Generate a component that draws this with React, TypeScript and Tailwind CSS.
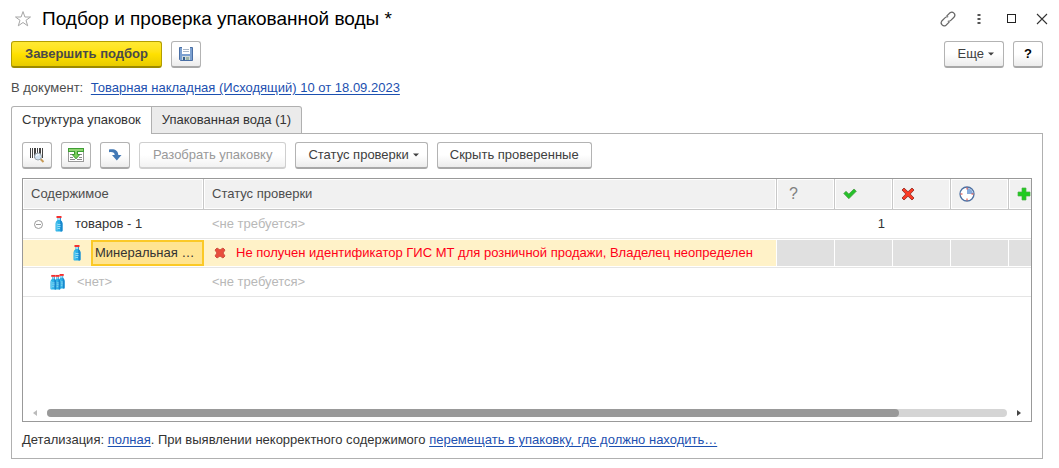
import type { ReactNode } from "react";
import { clsx } from "clsx";

const base =
  "flex h-[27px] shrink-0 items-center justify-center rounded-[3px] border border-b-2 text-[13px] leading-4 whitespace-nowrap";
const plain =
  "border-[#b3b3b3] border-b-[#a8a8a8] bg-linear-to-b from-white from-50% to-[#ececec] text-[#404040]";

function Button({
  children,
  label,
  icon,
  wide,
  disabled,
}: {
  children: ReactNode;
  label?: string;
  icon?: boolean;
  wide?: boolean;
  disabled?: boolean;
}) {
  return (
    <button
      type="button"
      aria-label={label}
      disabled={disabled}
      className={clsx(
        base,
        icon ? "w-[30px]" : wide ? "px-[13px]" : "px-3",
        disabled
          ? "border-[#cfcfcf] bg-linear-to-b from-white from-50% to-[#f2f2f2] text-[#999999]"
          : plain
      )}
    >
      {children}
    </button>
  );
}

function Caret() {
  return (
    <svg width="6" height="4" viewBox="0 0 6 4" className="ml-1 -mr-1" aria-hidden="true">
      <path d="M0 0.5h6L3 3.5z" fill="#404040" />
    </svg>
  );
}

function StarIcon() {
  return (
    <svg width="18" height="18" viewBox="0 0 18 18" fill="none" stroke="#a6a6a6" aria-hidden="true">
      <path d="M9 1.6l1.9 5.4h5.6l-4.5 3.3 1.7 5.500L9 12.500l-4.700 3.300L6 10.300 1.500 7h5.600z" />
    </svg>
  );
}

function LinkIcon() {
  return (
    <svg width="18" height="18" viewBox="0 0 18 18" fill="none" stroke="#666" strokeWidth="1.2" aria-hidden="true">
      <path d="M7.600 6.200l3.400-3.400a3 3 0 0 1 4.200 4.200l-3.400 3.400a3 3 0 0 1-3 .7" />
      <path d="M10.400 11.800l-3.400 3.400a3 3 0 0 1-4.200-4.200l3.400-3.400a3 3 0 0 1 3-.7" />
    </svg>
  );
}

function SaveIcon() {
  return (
    <svg width="14" height="14" viewBox="0 0 14 14" aria-hidden="true">
      <path d="M.5.5h13v13h-12l-1-1z" fill="#7ba0d0" stroke="#4a6fa5" />
      <path d="M3 0h8v7H3z" fill="#fff" />
      <path d="M4 2.5h6M4 4.5h6" stroke="#a9b7c8" />
      <path d="M3 9h8v4H3z" fill="#cfdadc" />
      <path d="M4 10h2v3H4z" fill="#355f8c" />
      <path d="M7 10h3v3H7z" fill="#9db5a6" />
    </svg>
  );
}

function BarcodeIcon() {
  return (
    <svg width="16" height="16" viewBox="0 0 16 16" aria-hidden="true">
      <path
        d="M1 1h1v10H1zM3 1h1v10H3zM5 1h2v10H5zM8 1h1v10H8zM10 1h2v10h-2zM13 1h1v10h-1z"
        fill="#444"
      />
      <path d="M11.500 12l3 3" stroke="#c79a55" strokeWidth="2" />
      <circle cx="9" cy="9.500" r="3.500" fill="#d3e4f2" stroke="#9aa3aa" />
      <path d="M7 9q1-1.500 3-1.300" stroke="#fff" fill="none" />
    </svg>
  );
}

function InsertIcon() {
  return (
    <svg width="16" height="14" viewBox="0 0 16 14" aria-hidden="true">
      <rect x=".5" y=".5" width="15" height="13" fill="#fff" stroke="#999" />
      <path d="M2 6.500h3M11 6.500h3M2 9.500h3M11 9.500h3M2 11.500h5M9 11.500h5" stroke="#888" />
      <path d="M0 0h16v4H0z" fill="#3f9e35" />
      <path d="M1 1h14v2H1z" fill="#8fd572" />
      <path d="M6.500 3.500h3v3h2.300L8 10.800 4.200 6.500h2.300z" fill="#7cce5c" stroke="#36952d" />
      <path d="M7 2h2v2H7z" fill="#8fd572" />
    </svg>
  );
}

function TurnIcon() {
  return (
    <svg width="14" height="14" viewBox="0 0 14 14" aria-hidden="true">
      <path d="M1 1.500C6 .3 10.300 2.200 10.300 7H13.500l-4.700 5.500L4 7h2.700C6.700 4.700 4.600 3.600 1 4.200z" fill="#4379b5" />
    </svg>
  );
}

function Bottle({ x = 0, y = 0 }: { x?: number; y?: number }) {
  return (
    <g transform={`translate(${x} ${y})`}>
      <path d="M2.500 2h3v2q2 1.500 2 3.500v7q0 1-1 1h-5q-1 0-1-1v-7q0-2 2-3.500z" fill="#2cb1e6" />
      <path d="M5 2h.8v2.200Q7.500 5.500 7.500 7.500v7q0 1-1 1H5.500z" fill="#1a86cc" />
      <path d="M2 6.500v8" stroke="#6fd3f5" />
      <path d="M2.500 8.500h3M2.500 10.500h3M2.500 12.500h2.500" stroke="#c4eefc" strokeWidth=".7" />
      <rect x="3" y="2" width="2" height="2" fill="#a8dbef" />
      <rect x="1.500" y="0" width="5" height="2" fill="#f32f2f" />
    </g>
  );
}

function BottleIcon() {
  return (
    <svg width="8" height="16" viewBox="0 0 8 16" className="shrink-0" aria-hidden="true">
      <Bottle />
    </svg>
  );
}

function BottlesIcon() {
  return (
    <svg width="15" height="16" viewBox="0 0 18 17" preserveAspectRatio="none" className="shrink-0" aria-hidden="true">
      <Bottle x={10} />
      <Bottle x={5} y={1} />
      <Bottle y={1} />
    </svg>
  );
}

function CheckIcon() {
  return (
    <svg width="14" height="12" viewBox="0 0 14 12" aria-hidden="true">
      <path d="M.8 5.500L3 3.300l2.800 2.800L11 1l2.300 2.200-7.500 7.500z" fill="#25c22a" stroke="#4c9d45" strokeWidth=".8" />
    </svg>
  );
}

function CrossIcon() {
  return (
    <svg width="14" height="14" viewBox="0 0 14 14" aria-hidden="true">
      <path
        d="M1 3l2-2 4 3.800L11 1l2 2-3.800 4L13 11l-2 2-4-3.800L3 13l-2-2 3.800-4z"
        fill="#fb3b25"
        stroke="#a33c33"
      />
    </svg>
  );
}

function ErrorIcon() {
  return (
    <svg width="12" height="12" viewBox="0 0 12 12" className="shrink-0" aria-hidden="true">
      <path d="M1 3l2-2 3 2 3-2 2 2-2 3 2 3-2 2-3-2-3 2-2-2 2-3z" fill="#e94e3d" stroke="#cf5142" />
    </svg>
  );
}

function ClockIcon() {
  return (
    <svg width="16" height="16" viewBox="0 0 16 16" aria-hidden="true">
      <circle cx="8" cy="8" r="7" fill="#fff" stroke="#4d71a3" strokeWidth="1.300" />
      <path d="M8 8V2a6 6 0 0 1 6 6z" fill="#86abdc" />
      <path d="M8 1.500v2M8 12.500v2M1.500 8h2M12.500 8h2" stroke="#e23c2e" />
    </svg>
  );
}

function PlusIcon() {
  return (
    <svg width="14" height="14" viewBox="0 0 14 14" aria-hidden="true">
      <path d="M5 1h4v4h4v4H9v4H5V9H1V5h4z" fill="#20cb20" stroke="#4caf45" strokeWidth=".7" />
    </svg>
  );
}

function HeadCell({ children, label }: { children: ReactNode; label?: string }) {
  return (
    <th
      scope="col"
      aria-label={label}
      className="h-[31px] border-r border-b border-[#c8c8c8] bg-[#f1f1f1] p-0 pl-2 text-left font-normal text-[#4d4d4d] shadow-[inset_0_0_0_1px_white]"
    >
      {children}
    </th>
  );
}

const link = "text-[#1c50b0] underline underline-offset-2";
const cell = "h-[29px] border-b border-[#e5e5e5] p-0";
const counters = ["unknown", "ok", "failed", "pending", "added"];

function ContentTable() {
  return (
    <table className="w-full min-w-[1044px] table-fixed border-separate border-spacing-0">
      <colgroup>
        <col className="w-[181px]" />
        <col />
        {counters.map((c) => (
          <col key={c} className="w-[58px]" />
        ))}
      </colgroup>
      <thead>
        <tr>
          <HeadCell>Содержимое</HeadCell>
          <HeadCell>Статус проверки</HeadCell>
          <HeadCell label="Не проверено">
            <span className="pl-1 text-base text-[#808080]">?</span>
          </HeadCell>
          <HeadCell label="В наличии">
            <CheckIcon />
          </HeadCell>
          <HeadCell label="Отсутствует">
            <CrossIcon />
          </HeadCell>
          <HeadCell label="Отложено">
            <ClockIcon />
          </HeadCell>
          <HeadCell label="Добавлено">
            <PlusIcon />
          </HeadCell>
        </tr>
      </thead>
      <tbody>
        <tr>
          <td className={cell}>
            <div className="flex items-center pl-[11px]">
              <button type="button" aria-label="Свернуть" className="mr-3">
                <svg width="9" height="9" viewBox="0 0 9 9" fill="none" stroke="#999" className="block">
                  <circle cx="4.500" cy="4.500" r="4" />
                  <path d="M2 4.500h5" />
                </svg>
              </button>
              <BottleIcon />
              <span className="pl-3">товаров - 1</span>
            </div>
          </td>
          <td className={clsx(cell, "pl-2 text-[#b8b8b8]")}>&lt;не требуется&gt;</td>
          {counters.map((c) => (
            <td key={c} className={clsx(cell, "pr-2 text-right")}>
              {c === "ok" && "1"}
            </td>
          ))}
        </tr>
        {/* Selected row */}
        <tr aria-selected="true">
          <td className={cell}>
            <div className="flex h-[26px] items-center bg-[#fff2c8] pl-[50px]">
              <BottleIcon />
              <span className="ml-2.5 flex h-full flex-1 items-center border-2 border-[#fbc926] bg-[#ffe491] px-0.5 whitespace-nowrap">
                Минеральная …
              </span>
            </div>
          </td>
          <td className={cell}>
            <div className="mr-px flex h-[26px] items-center gap-2.5 bg-[#fff2c8] pl-2.5 text-[#ff0018]">
              <ErrorIcon />
              <span className="truncate">
                Не получен идентификатор ГИС МТ для розничной продажи, Владелец неопределен
              </span>
            </div>
          </td>
          {counters.map((c) => (
            <td key={c} className={cell}>
              <div className="mr-px h-[26px] bg-[#e0e0e0]" />
            </td>
          ))}
        </tr>
        <tr>
          <td className={cell}>
            <div className="flex items-center gap-3 pl-[27px] text-[#b8b8b8]">
              <BottlesIcon />
              &lt;нет&gt;
            </div>
          </td>
          <td className={clsx(cell, "pl-2 text-[#b8b8b8]")}>&lt;не требуется&gt;</td>
          {counters.map((c) => (
            <td key={c} className={cell} />
          ))}
        </tr>
      </tbody>
    </table>
  );
}

function ScrollBar() {
  return (
    <div className="flex h-4 items-center gap-2.5 px-2.5">
      <button type="button" aria-label="Влево">
        <svg width="4" height="6" viewBox="0 0 4 6" className="block">
          <path d="M4 0v6L0 3z" fill="#bbb" />
        </svg>
      </button>
      <div className="h-2 flex-1 rounded-full bg-[#d5d5d5]">
        <div className="h-2 w-[88.7%] rounded-full bg-[#999999]" />
      </div>
      <button type="button" aria-label="Вправо">
        <svg width="4" height="6" viewBox="0 0 4 6" className="block">
          <path d="M0 0v6l4-3z" fill="#444" />
        </svg>
      </button>
    </div>
  );
}

export default function App() {
  return (
    <main className="bg-white pr-4 pb-2.5 pl-[11px] font-['Liberation_Sans',Arial,sans-serif] text-[13px] leading-4 text-[#333333]">
      {/* Window title */}
      <header className="flex h-[41px] items-center pb-1">
        <button type="button" aria-label="В избранное" className="mr-2.5 ml-[3px]">
          <StarIcon />
        </button>
        <h1 className="flex-1 text-[19px] leading-6 text-black">Подбор и проверка упакованной воды *</h1>
        <div className="-mr-[5px] flex items-center gap-[18px]">
          <button type="button" aria-label="Ссылка">
            <LinkIcon />
          </button>
          <button type="button" aria-label="Меню" className="pr-2 pl-0.5">
            <svg width="4" height="12" viewBox="0 0 4 12" fill="#555" className="block">
              <path d="M.5 1h3v2h-3zM.5 5h3v2h-3zM.5 9h3v2h-3z" />
            </svg>
          </button>
          <button type="button" aria-label="Развернуть" className="pr-0.5">
            <svg width="9" height="9" viewBox="0 0 9 9" fill="none" stroke="#222" className="block">
              <rect x=".5" y=".5" width="8" height="8" />
            </svg>
          </button>
          <button type="button" aria-label="Закрыть">
            <svg width="12" height="12" viewBox="0 0 12 12" fill="none" stroke="#333" strokeWidth="1.100" className="block">
              <path d="M1 1l10 10M11 1L1 11" />
            </svg>
          </button>
        </div>
      </header>

      {/* Form commands */}
      <div className="flex gap-[9px]">
        <button
          type="button"
          className={clsx(
            base,
            "border-[#b39e00] border-b-[#9c8a00] bg-linear-to-b from-[#ffe934] via-[#ffe100] to-[#e8cb00] px-[13px] font-bold text-[#4a4a4a]"
          )}
        >
          Завершить подбор
        </button>
        <Button icon label="Записать">
          <SaveIcon />
        </Button>
        <span className="flex-1" />
        <Button wide>
          Еще
          <Caret />
        </Button>
        <Button icon label="Справка">
          <b className="text-black">?</b>
        </Button>
      </div>

      <p className="pt-3 pb-2.5 text-[#4d4d4d]">
        В документ:{" "}
        <a href="#document" className={clsx(link, "ml-1")}>
          Товарная накладная (Исходящий) 10 от 18.09.2023
        </a>
      </p>

      <div role="tablist" className="-mb-px flex">
        <button
          type="button"
          role="tab"
          aria-selected="true"
          className="relative h-7 rounded-tl-[3px] border border-b-0 border-[#b0b0b0] bg-white px-2.5 pb-px"
        >
          Структура упаковок
        </button>
        <button
          type="button"
          role="tab"
          aria-selected="false"
          className="h-7 rounded-tr-[3px] border border-l-0 border-[#b0b0b0] bg-[#ebebeb] px-2.5"
        >
          Упакованная вода (1)
        </button>
      </div>

      <section className="border border-[#b0b0b0] px-2.5 pt-2">
        <div className="flex gap-[9px] pb-[9px]">
          <Button icon label="Поиск по штрихкоду">
            <BarcodeIcon />
          </Button>
          <Button icon label="Загрузить">
            <InsertIcon />
          </Button>
          <Button icon label="Переместить">
            <TurnIcon />
          </Button>
          <Button wide disabled>
            Разобрать упаковку
          </Button>
          <Button>
            Статус проверки
            <Caret />
          </Button>
          <Button>Скрыть проверенные</Button>
        </div>

        <div className="border border-[#999999]">
          <div className="min-h-[226px] overflow-hidden">
            <ContentTable />
          </div>
          <ScrollBar />
        </div>

        <p className="py-2.5">
          Детализация:{" "}
          <a href="#detail" className={link}>
            полная
          </a>
          . При выявлении некорректного содержимого{" "}
          <a href="#move" className={link}>
            перемещать в упаковку, где должно находить…
          </a>
        </p>
      </section>
    </main>
  );
}
